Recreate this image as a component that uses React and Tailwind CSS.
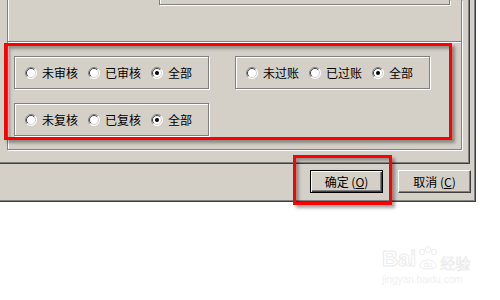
import React from 'react';

const Radio = ({ checked }) => (
  <svg width="12" height="12" viewBox="0 0 12 12" className="shrink-0">
    <circle cx="6" cy="6" r="5.5" fill="#ffffff" />
    <path d="M2.1 9.9 A5.5 5.5 0 0 1 9.9 2.1" stroke="#808080" strokeWidth="1" fill="none" />
    <path d="M9.9 2.1 A5.5 5.5 0 0 1 2.1 9.9" stroke="#ffffff" strokeWidth="1" fill="none" />
    <path d="M2.8 9.2 A4.5 4.5 0 0 1 9.2 2.8" stroke="#404040" strokeWidth="1" fill="none" />
    <path d="M9.2 2.8 A4.5 4.5 0 0 1 2.8 9.2" stroke="#d4d0c8" strokeWidth="1" fill="none" />
    {checked && <circle cx="6" cy="6" r="2" fill="#000000" />}
  </svg>
);

const Group = ({ items }) => (
  <div className="w-[195px] h-[33px] border border-[#808080] shadow-[inset_1px_1px_0_#ffffff,1px_1px_0_#ffffff] flex items-center pl-[10px] gap-[10px]">
    {items.map((label, i) => (
      <div key={i} className="flex items-center">
        <Radio checked={i === items.length - 1} />
        <span className="ml-[5px] text-[12px] leading-[12px] text-black">{label}</span>
      </div>
    ))}
  </div>
);

const App = () => {
  return (
    <div className="relative w-[500px] h-[300px] bg-white overflow-hidden font-['Noto_Sans_CJK_SC',sans-serif]">
      {/* dialog */}
      <div className="w-[476px] h-[202px] bg-[#d4d0c8] border-r border-b border-[#404040] shadow-[inset_-1px_-1px_0_#808080] flex flex-col">
        {/* tab page */}
        <div className="w-[470px] h-[164px] shrink-0 border-r border-b border-[#404040] shadow-[inset_-1px_-1px_0_#808080] pl-[7px]">
          <div className="w-[455px] h-[150px] border-l border-r border-b border-[#808080] shadow-[inset_1px_0_0_#ffffff,1px_1px_0_#ffffff] flex flex-col">
            <div className="h-[41px] shrink-0">
              <div className="ml-[151px] w-[291px] h-[5px] border-l border-r border-b border-[#808080] shadow-[inset_1px_0_0_#ffffff,1px_1px_0_#ffffff]"></div>
            </div>
            <div className="h-[2px] shrink-0 border-t border-[#808080] bg-white"></div>
            <div className="pt-[13px] pl-[6px] flex items-start">
              <div className="flex flex-col gap-[14px]">
                <Group items={["未审核", "已审核", "全部"]} />
                <Group items={["未复核", "已复核", "全部"]} />
              </div>
              <div className="ml-[26px]">
                <Group items={["未过账", "已过账", "全部"]} />
              </div>
            </div>
          </div>
        </div>
        {/* buttons */}
        <div className="flex justify-end gap-[15px] pt-[6px] pr-[4px]">
          <button className="w-[73px] h-[23px] border border-black bg-[#d4d0c8] shadow-[inset_1px_1px_0_#ffffff,inset_-1px_-1px_0_#404040,inset_-2px_-2px_0_#808080] text-[12px] leading-[12px] text-black flex items-center justify-center">
            确定 (<span className="underline">O</span>)
          </button>
          <button className="w-[73px] h-[23px] border-t border-l border-white border-r border-b border-r-[#404040] border-b-[#404040] bg-[#d4d0c8] shadow-[inset_-1px_-1px_0_#808080] text-[12px] leading-[12px] text-black flex items-center justify-center">
            取消 (<span className="underline">C</span>)
          </button>
        </div>
      </div>

      {/* watermark */}
      <div className="pl-[382px] pt-[44px] select-none">
        <div className="flex items-end h-[24px]">
          <span className="text-[22px] leading-none font-bold text-transparent [-webkit-text-stroke:1px_#ececec] font-['Liberation_Sans',sans-serif]">Bai</span>
          <svg width="22" height="24" viewBox="0 0 22 24" className="mx-[1px]">
            <g fill="none" stroke="#ececec" strokeWidth="1">
              <ellipse cx="5" cy="6" rx="2.5" ry="3" />
              <ellipse cx="11" cy="3.5" rx="2.5" ry="3" />
              <ellipse cx="17" cy="6" rx="2.5" ry="3" />
              <path d="M3 20 C3 12 19 12 19 20 C19 24 3 24 3 20 Z" />
            </g>
            <text x="11" y="21" textAnchor="middle" fontSize="8" fill="#ececec" fontFamily="Liberation Sans, sans-serif">du</text>
          </svg>
          <span className="text-[15px] leading-none text-transparent [-webkit-text-stroke:0.6px_#e8e8e8]">经验</span>
        </div>
        <div className="text-[10px] leading-none mt-[5px] font-['Liberation_Sans',sans-serif] text-[#efefef]">jingyan.baidu.com</div>
      </div>

      {/* highlight boxes */}
      <div className="absolute left-[4px] top-[43px] w-[448px] h-[97px] border-[3px] border-[#ff0000] shadow-[3px_3px_3px_rgba(0,0,0,0.35),inset_3px_3px_3px_rgba(0,0,0,0.3)]"></div>
      <div className="absolute left-[293px] top-[155px] w-[99px] h-[50px] border-[3px] border-[#ff0000] shadow-[3px_3px_3px_rgba(0,0,0,0.35),inset_3px_3px_3px_rgba(0,0,0,0.3)]"></div>
    </div>
  );
};

export default App;
